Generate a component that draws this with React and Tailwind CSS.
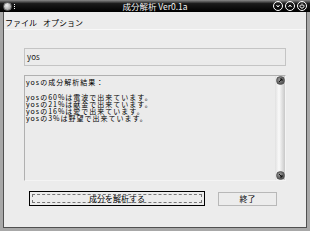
import React from "react";

const font = { fontFamily: '"Noto Sans CJK JP", "DejaVu Sans", sans-serif' };

function Ball({ up }) {
  return (
    <div className="w-[9px] h-[9px] rounded-full bg-[radial-gradient(circle_at_40%_35%,#9a9a9a,#3a3a3a)] border border-[#555] flex items-center justify-center">
      <svg width="5" height="5" viewBox="0 0 5 5">
        {up ? <path d="M1 4 L4 1 M2 1 H4 V3" stroke="#111" strokeWidth="1" fill="none" /> : <path d="M1 1 L4 4 M2 4 H4 V2" stroke="#111" strokeWidth="1" fill="none" />}
      </svg>
    </div>
  );
}

function TitleBtn({ children }) {
  return (
    <div className="w-[10px] h-[10px] rounded-full border border-white flex items-center justify-center">
      <svg width="6" height="6" viewBox="0 0 6 6" fill="none" stroke="white" strokeWidth="1">{children}</svg>
    </div>
  );
}

export default function App() {
  const lines = [
    "yosの60%は電波で出来ています。",
    "yosの21%は献金で出来ています。",
    "yosの16%は愛で出来ています。",
    "yosの3%は野望で出来ています。",
  ];
  return (
    <div className="w-[310px] h-[231px] overflow-hidden bg-[#a8a8a8] flex flex-col" style={font}>
      {/* title bar */}
      <div className="h-[12px] bg-[linear-gradient(#8a8a8a,#1a1a1a_30%,#000)] flex items-center px-[3px] relative">
        <div className="flex items-center gap-[2px]">
          <div className="w-[9px] h-[9px] rounded-full bg-[radial-gradient(circle_at_40%_35%,#f0f0f0,#888)] border border-[#666]" />
          <div className="flex flex-col gap-[1px]">
            <div className="w-[1px] h-[1px] bg-white" />
            <div className="w-[1px] h-[1px] bg-white" />
            <div className="w-[1px] h-[1px] bg-white" />
          </div>
        </div>
        <div className="absolute left-0 right-0 top-0 h-[12px] flex items-center justify-center text-[#f4f4f4] text-[8.5px] leading-none">
          成分解析 Ver0.1a
        </div>
        <div className="ml-auto flex items-center gap-[2px] relative">
          <TitleBtn><path d="M1.5 2 L3 4 L4.5 2" /></TitleBtn>
          <TitleBtn><path d="M1.5 4 L3 2 L4.5 4" /></TitleBtn>
          <TitleBtn><path d="M3 0.5 V3 M1.5 1.8 A2 2 0 1 0 4.5 1.8" /></TitleBtn>
        </div>
      </div>
      <div className="flex-1 flex pl-[3px] pr-[3px] pb-[3px]">
        <div className="flex-1 bg-[#ececec] border-l border-r border-b border-[#505050] flex flex-col">
          {/* menu */}
          <div className="h-[18px] flex items-center gap-[6px] px-[1px] text-[8px] text-black border-b border-[#f8f8f8] pt-[5px]">
            <span>ファイル</span>
            <span>オプション</span>
          </div>
          <div className="flex flex-col px-[20px] pt-[18px]">
            <div className="h-[18px] border border-[#c4c4c4] bg-[#ebebeb] flex items-center px-[2px] text-[8px] text-[#222]">
              yos
            </div>
            <div className="mt-[9px] h-[106px] border border-[#b0b0b0] border-r-[#f4f4f4] border-b-[#f4f4f4] bg-[#ebebeb] flex">
              <div className="flex-1 px-[1px] pt-[3px] text-[7px] leading-[7.3px] tracking-[1px] text-black">
                <div>yosの成分解析結果：</div>
                <div className="h-[7.3px]" />
                {lines.map((l) => (
                  <div key={l}>{l}</div>
                ))}
              </div>
              <div className="w-[10px] flex flex-col items-center bg-[linear-gradient(90deg,#e0e0e0,#fafafa_40%,#c8c8c8)]">
                <Ball up />
                <div className="flex-1" />
                <Ball />
              </div>
            </div>
            <div className="mt-[10px] flex items-center pl-[5px] pr-[9px]">
              <div className="w-[176px] h-[15px] border border-black bg-[#ececec] p-[2px]">
                <div className="w-full h-full border border-dashed border-[#777] flex items-center justify-center text-[8px] leading-none">
                  成分を解析する
                </div>
              </div>
              <div className="ml-auto w-[59px] h-[14px] border border-[#b8b8b8] bg-[#ececec] flex items-center justify-center text-[8px] leading-none">
                終了
              </div>
            </div>
          </div>
        </div>
      </div>
    </div>
  );
}
